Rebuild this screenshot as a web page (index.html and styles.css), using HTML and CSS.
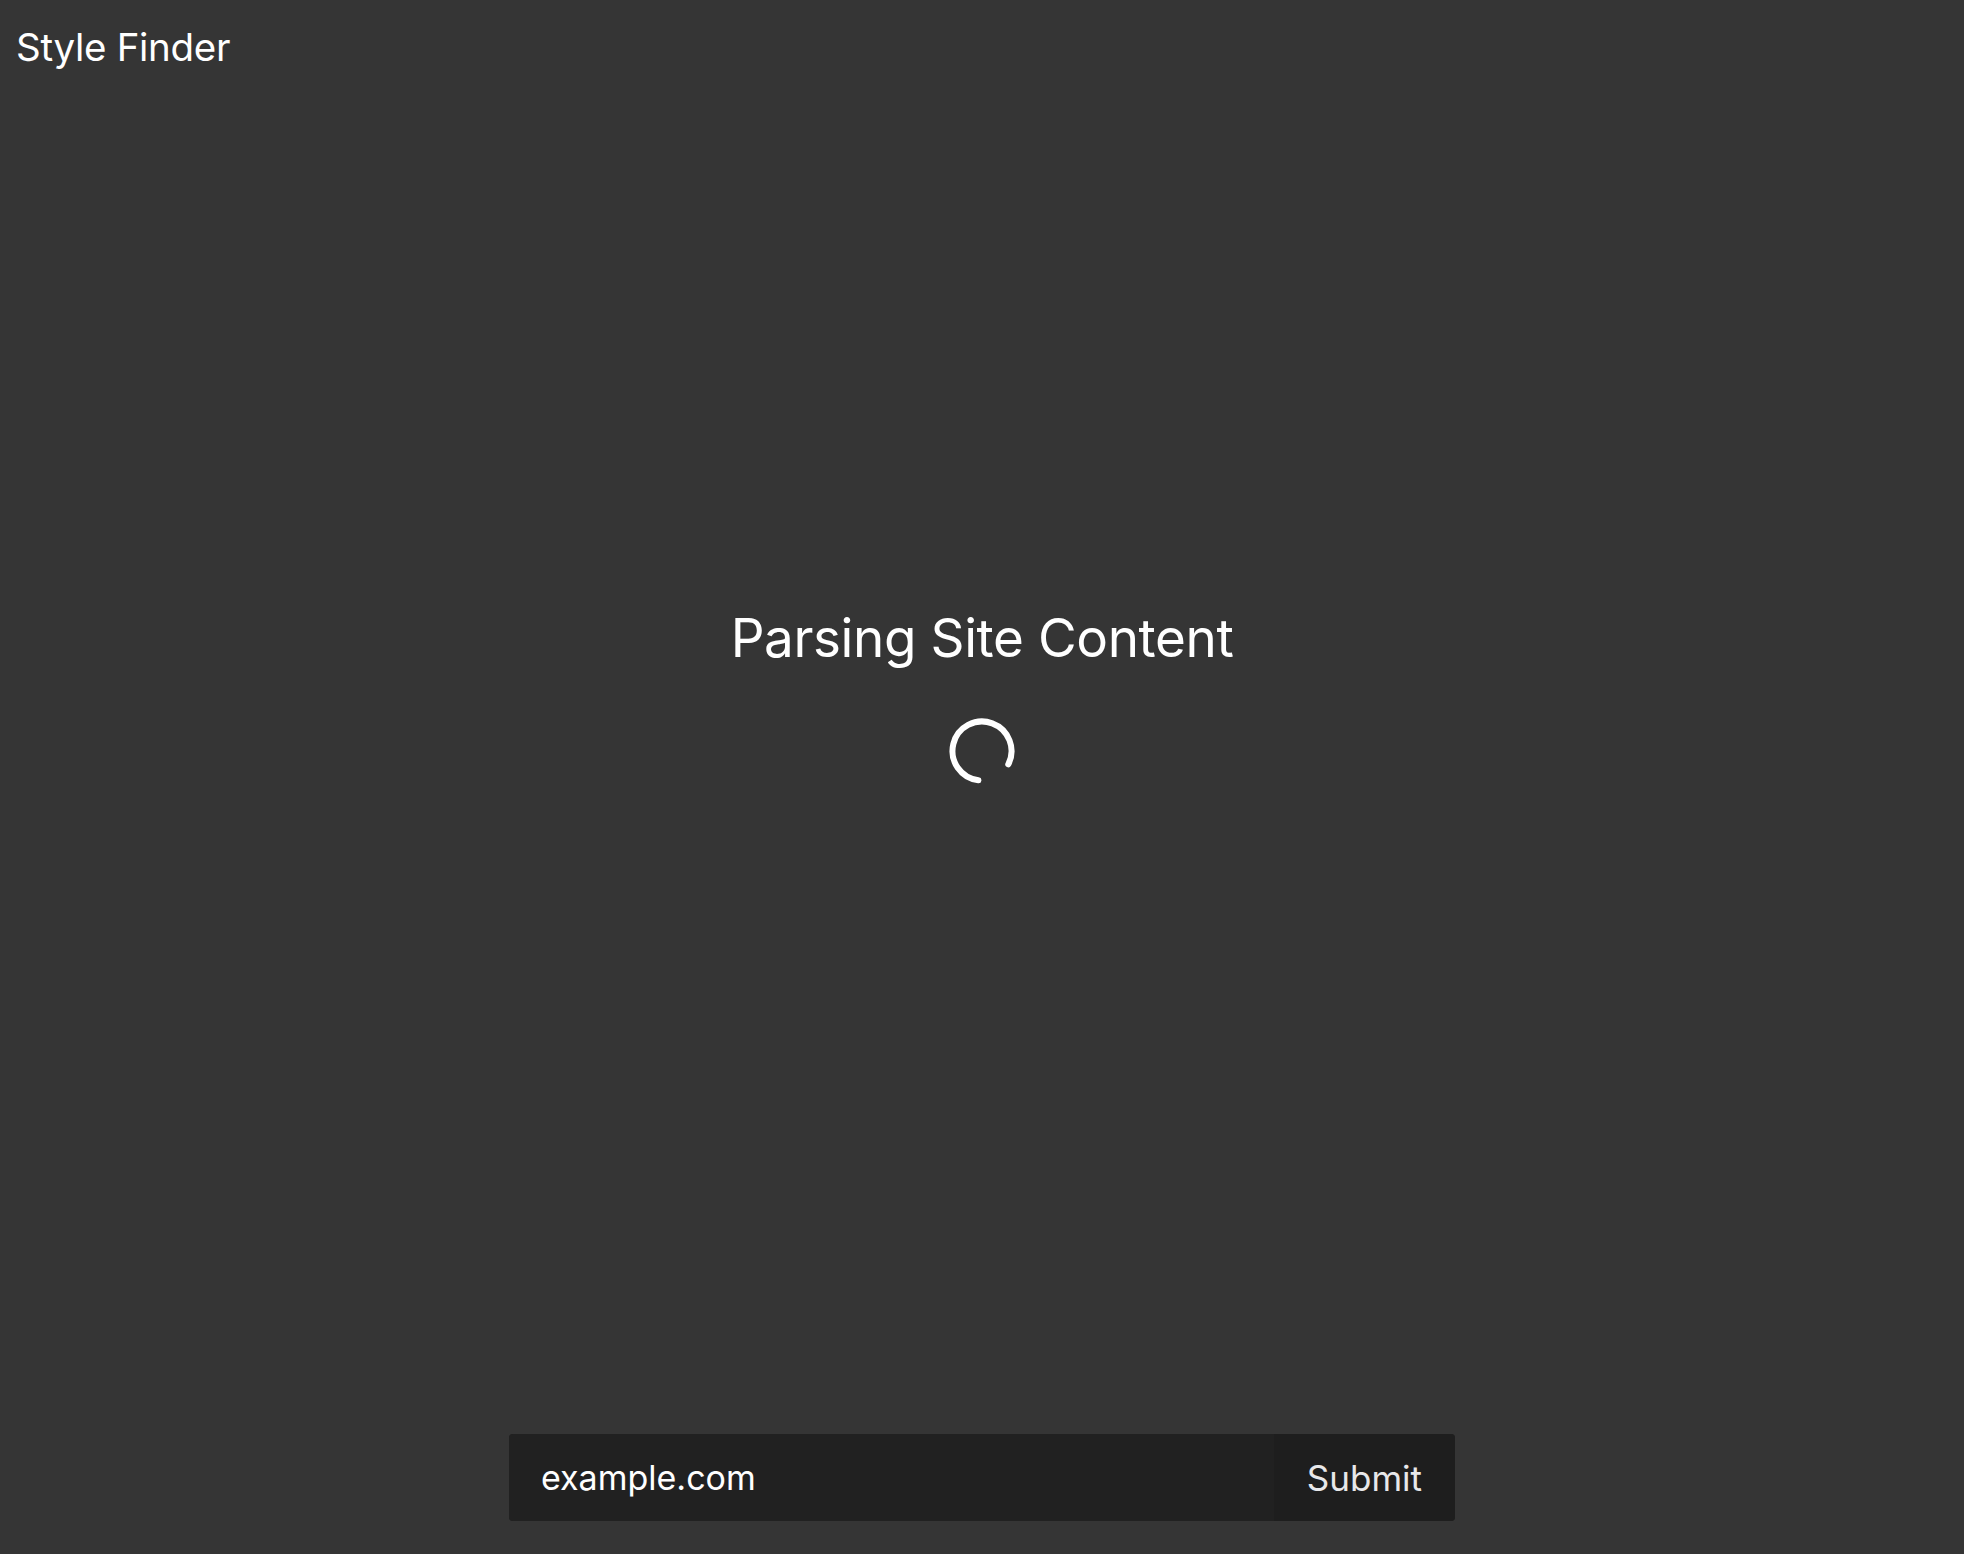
FILE: index.html
```html
<!DOCTYPE html>
<html lang="en">
<head>
<meta charset="utf-8">
<title>Style Finder</title>
<link rel="stylesheet" href="styles.css">
</head>
<body>
<div class="page">
  <header class="header">
    <h1 class="brand">Style Finder</h1>
  </header>
  <main class="main">
    <h2 class="status">Parsing Site Content</h2>
    <svg class="spinner" width="70" height="70" viewBox="0 0 70 70" aria-hidden="true">
      <path d="M 61.28 48.39 A 29.5 29.5 0 1 0 31.4 64.28" fill="none" stroke="#ffffff" stroke-width="6" stroke-linecap="round"/>
    </svg>
  </main>
  <footer class="footer">
    <form class="search">
      <input class="search-input" type="text" value="example.com">
      <button class="search-button" type="button">Submit</button>
    </form>
  </footer>
</div>
</body>
</html>
```
FILE: styles.css
```css
* { box-sizing: border-box; }
html, body {
  margin: 0;
  height: 100%;
  background: #353535;
}
body {
  font-family: Inter, "Noto Sans", sans-serif;
  color: #ffffff;
}
.page {
  height: 100vh;
  display: flex;
  flex-direction: column;
}
.header {
  padding: 22px 16px 0;
}
.brand {
  margin: 0;
  font-size: 38.5px;
  font-weight: 400;
  line-height: 50px;
  letter-spacing: -0.3px;
}
.main {
  flex: 1;
  display: flex;
  flex-direction: column;
  align-items: center;
  padding-top: 532px;
}
.status {
  margin: 0;
  font-size: 53px;
  font-weight: 400;
  line-height: 68px;
  letter-spacing: -0.4px;
}
.spinner {
  margin-top: 44px;
}
.footer {
  display: flex;
  justify-content: center;
  padding-bottom: 33px;
}
.search {
  width: 946px;
  height: 87px;
  display: flex;
  border-radius: 4px;
  overflow: hidden;
  background: #212121;
}
.search-input {
  flex: 1;
  border: 0;
  outline: 0;
  background: #212121;
  color: #ffffff;
  font-family: Inter, "Noto Sans", sans-serif;
  font-size: 34px;
  padding: 0 0 0 32px;
}
.search-button {
  border: 0;
  background: #1e1e1e;
  color: #e8e8ea;
  font-family: Inter, "Noto Sans", sans-serif;
  font-size: 35px;
  padding: 0 33px;
}
```
